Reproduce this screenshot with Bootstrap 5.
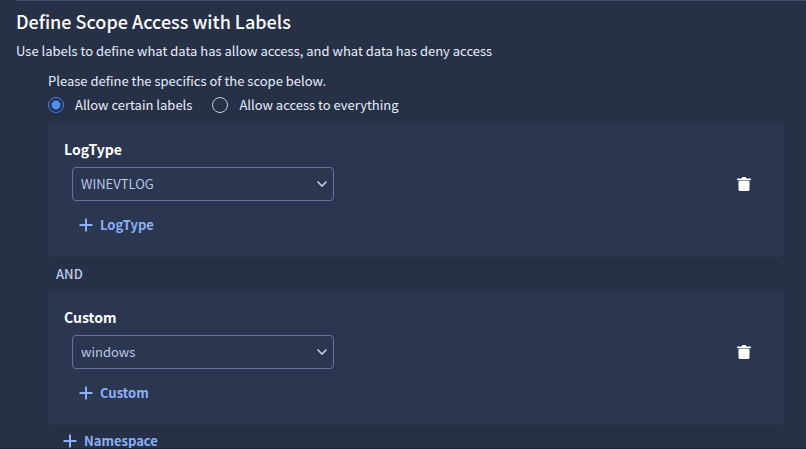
<!DOCTYPE html>
<html lang="en">
<head>
<meta charset="utf-8">
<meta name="viewport" content="width=device-width, initial-scale=1">
<title>Define Scope Access with Labels</title>
<link href="https://cdn.jsdelivr.net/npm/bootstrap@5.3.0/dist/css/bootstrap.min.css" rel="stylesheet">
<style>
  body { background: #263047; color: #e8eefa; font-family: "Noto Sans CJK SC", "Noto Sans", sans-serif; font-size: 13px; line-height: 20px; }
  .scope-page { border-bottom: 1px solid #1d2439; }
  .top-rule { height: 1px; background: #404d6c; }
  .page-title { font-size: 18px; line-height: 24px; font-weight: 500; color: #fff; }
  .scope-form { padding: 10px 22px 0 32px; }
  .scope-legend { font-size: 13px; line-height: 20px; }
  .radio-row { gap: 20px; }
  .radio-item { gap: 11px; }
  .scope-radio.form-check-input { width: 16px; height: 16px; background-color: transparent; border: 1px solid #c3cde2; box-shadow: none; }
  .scope-radio.form-check-input:checked { border-color: #4285e8; background-color: transparent; background-image: radial-gradient(circle, #4f8ff0 4px, transparent 5px); }
  .scope-panel { background: #2b3650; padding: 16px 32px 20px 16px; border-radius: 4px; }
  .panel-title { font-size: 14px; line-height: 20px; font-weight: 600; color: #fff; }
  .select-wrap { width: 262px; }
  .scope-select.form-select { height: 34px; padding: 0 32px 0 8px; font-size: 13px; line-height: 20px; color: #b9c7e4; background: transparent; border: 1px solid #66759f; border-radius: 4px; }
  .chevron { right: 6px; top: 11px; pointer-events: none; }
  .add-row { padding: 12px 15px 0; }
  .add-btn.btn { --bs-btn-color: #8ab0f7; --bs-btn-hover-color: #b0caff; font-size: 13px; line-height: 24px; font-weight: 600; padding: 0; border: 0; gap: 7px; }
  .joiner { line-height: 34px; font-weight: 500; color: #bccbe6; }
</style>
<script src="https://cdn.jsdelivr.net/npm/bootstrap@5.3.0/dist/js/bootstrap.bundle.min.js" defer></script>
</head>
<body>
<main class="scope-page vh-100 overflow-hidden">
  <div class="top-rule ms-3"></div>
  <h1 class="page-title mb-0 mt-2 ms-3">Define Scope Access with Labels</h1>
  <p class="mb-0 mt-2 ms-3">Use labels to define what data has allow access, and what data has deny access</p>
  <div class="scope-form ms-3">
    <fieldset>
      <legend class="scope-legend float-none mb-1">Please define the specifics of the scope below.</legend>
      <div class="radio-row d-flex flex-wrap">
        <div class="radio-item d-flex align-items-center">
          <input class="form-check-input scope-radio m-0" type="radio" name="access" id="certain" checked>
          <label for="certain">Allow certain labels</label>
        </div>
        <div class="radio-item d-flex align-items-center">
          <input class="form-check-input scope-radio m-0" type="radio" name="access" id="everything">
          <label for="everything">Allow access to everything</label>
        </div>
      </div>
    </fieldset>
    <section class="scope-panel mt-2">
      <h2 class="panel-title mb-2"><label for="logtype">LogType</label></h2>
      <div class="d-flex align-items-center justify-content-between ps-2">
        <div class="select-wrap position-relative">
          <select class="form-select scope-select" id="logtype"><option>WINEVTLOG</option></select>
          <svg class="chevron position-absolute" width="12" height="12" viewBox="0 0 12 12" fill="none" stroke="#bccbe6" stroke-width="1.6" aria-hidden="true"><path d="M1.5 3.5 6 8l4.500-4.500"/></svg>
        </div>
        <button type="button" class="btn p-0 border-0 d-flex" aria-label="Remove LogType">
          <svg width="16" height="16" viewBox="0 0 16 16" fill="#fff" aria-hidden="true"><path d="M1 2.500h4.500L6.500 1h3l1 1.500H15V4H1z"/><path fill="#8d93a8" d="M2.500 4h11v1h-11z"/><path d="M2.500 5h11v8.500q0 1.500-1.500 1.500H4q-1.500 0-1.500-1.500z"/></svg>
        </button>
      </div>
      <div class="add-row">
        <button type="button" class="btn add-btn d-flex align-items-center"><svg width="14" height="14" viewBox="0 0 14 14" fill="currentColor" aria-hidden="true"><path d="M6 .5h2V6h5.500v2H8v5.500H6V8H.5V6H6z"/></svg>LogType</button>
      </div>
    </section>
    <div class="joiner ps-2">AND</div>
    <section class="scope-panel">
      <h2 class="panel-title mb-2"><label for="custom">Custom</label></h2>
      <div class="d-flex align-items-center justify-content-between ps-2">
        <div class="select-wrap position-relative">
          <select class="form-select scope-select" id="custom"><option>windows</option></select>
          <svg class="chevron position-absolute" width="12" height="12" viewBox="0 0 12 12" fill="none" stroke="#bccbe6" stroke-width="1.6" aria-hidden="true"><path d="M1.5 3.500 6 8l4.500-4.500"/></svg>
        </div>
        <button type="button" class="btn p-0 border-0 d-flex" aria-label="Remove Custom">
          <svg width="16" height="16" viewBox="0 0 16 16" fill="#fff" aria-hidden="true"><path d="M1 2.500h4.500L6.500 1h3l1 1.500H15V4H1z"/><path fill="#8d93a8" d="M2.500 4h11v1h-11z"/><path d="M2.500 5h11v8.500q0 1.500-1.500 1.500H4q-1.500 0-1.500-1.500z"/></svg>
        </button>
      </div>
      <div class="add-row">
        <button type="button" class="btn add-btn d-flex align-items-center"><svg width="14" height="14" viewBox="0 0 14 14" fill="currentColor" aria-hidden="true"><path d="M6 .5h2V6h5.500v2H8v5.500H6V8H.5V6H6z"/></svg>Custom</button>
      </div>
    </section>
    <div class="add-row pt-1">
      <button type="button" class="btn add-btn d-flex align-items-center"><svg width="14" height="14" viewBox="0 0 14 14" fill="currentColor" aria-hidden="true"><path d="M6 .5h2V6h5.500v2H8v5.500H6V8H.5V6H6z"/></svg>Namespace</button>
    </div>
  </div>
</main>
</body>
</html>
